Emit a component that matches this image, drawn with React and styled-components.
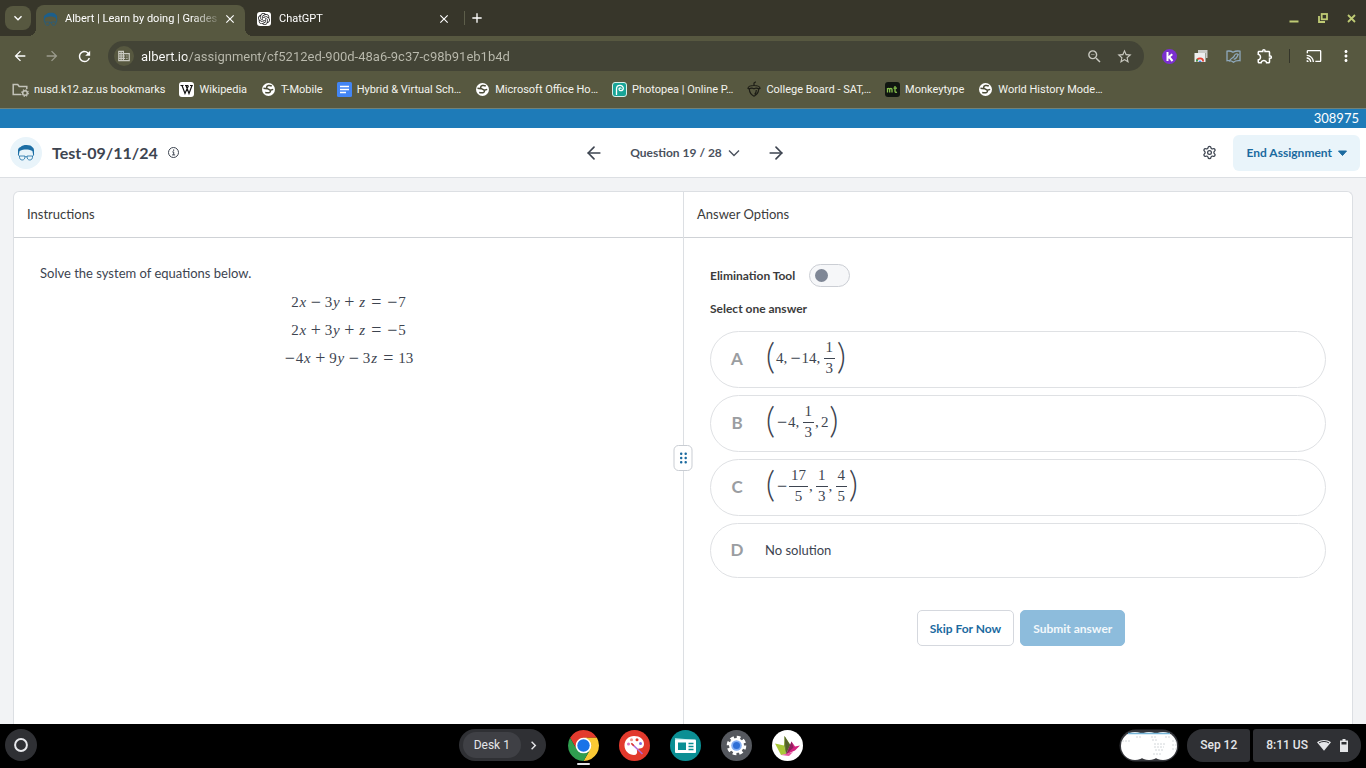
import { useState } from "react";
import styled, { createGlobalStyle, css } from "styled-components";
import {
  MdAdd,
  MdArrowBack,
  MdArrowForward,
  MdBusiness,
  MdCast,
  MdChevronRight,
  MdClose,
  MdKeyboardArrowDown,
  MdMoreVert,
  MdOutlineExtension,
  MdRefresh,
  MdStarBorder,
  MdZoomOut,
} from "react-icons/md";
import { SiOpenai } from "react-icons/si";
import { ArrowLeft, ArrowRight, Settings } from "lucide-react";

const GlobalStyles = createGlobalStyle`
  :root {
    --color-strip: #37362a;
    --color-toolbar: #575840;
    --color-omnibox: #434436;
    --color-blue: #1e7bb8;
    --color-blue-dark: #1b6a9f;
    --color-text: #3d4450;
    --color-line: #dcdfe3;
    --color-pill: #2f3034;
  }

  *,
  *::before,
  *::after {
    box-sizing: border-box;
  }

  body {
    margin: 0;
    font-family: Lato, sans-serif;
    font-size: 13px;
    color: var(--color-text);
  }

  button,
  input {
    font: inherit;
    color: inherit;
    border: none;
    background: none;
    padding: 0;
    margin: 0;
  }

  svg {
    display: block;
    flex-shrink: 0;
  }
`;

const Screen = styled.div`
  height: 100vh;
  display: flex;
  flex-direction: column;
  overflow: hidden;
`;

/* Browser */

const Browser = styled.header`
  font-family: Roboto, sans-serif;
  font-size: 11px;
  color: #fff;
  background-color: var(--color-toolbar);
  border-bottom: 1px solid #718279;
`;

const TabStrip = styled.div`
  height: 36px;
  display: flex;
  align-items: center;
  padding-left: 5px;
  background-color: var(--color-strip);
`;

const TabSearch = styled.button`
  width: 26px;
  height: 24px;
  border-radius: 8px;
  background-color: var(--color-toolbar);
  display: grid;
  place-items: center;
  margin-right: 5px;
`;

const Tab = styled.div`
  position: relative;
  width: 209px;
  height: 31px;
  align-self: flex-end;
  display: flex;
  align-items: center;
  padding: 0 8px 4px 7px;
  margin-right: 5px;
  border-radius: 8px 8px 0 0;

  ${(props) =>
    props.$active &&
    css`
      background-color: var(--color-toolbar);

      &::before,
      &::after {
        content: "";
        position: absolute;
        bottom: 0;
        width: 8px;
        height: 8px;
      }

      &::before {
        right: 100%;
        background: radial-gradient(
          circle at 0 0,
          transparent 8px,
          var(--color-toolbar) 8px
        );
      }

      &::after {
        left: 100%;
        background: radial-gradient(
          circle at 100% 0,
          transparent 8px,
          var(--color-toolbar) 8px
        );
      }
    `}
`;

const TabTitle = styled.span`
  flex: 1;
  margin-left: 8px;
  overflow: hidden;
  white-space: nowrap;
  mask-image: linear-gradient(90deg, #000 80%, transparent);
`;

const Favicon = styled.span`
  width: 14px;
  height: 14px;
  border-radius: 3px;
  display: grid;
  place-items: center;
  background-color: ${(props) => props.$bg || "transparent"};
  color: #222;
`;

const StripDivider = styled.span`
  width: 1px;
  height: 14px;
  background-color: #5d5e4a;
`;

const NewTab = styled.button`
  width: 24px;
  height: 28px;
  display: grid;
  place-items: center;
`;

const WindowControls = styled.div`
  margin-left: auto;
  display: flex;
  color: #bfcb74;
`;

const WindowButton = styled.button`
  width: 29px;
  height: 30px;
  display: grid;
  place-items: center;
`;

const Toolbar = styled.div`
  height: 40px;
  display: flex;
  align-items: center;
  padding: 0 4px;
`;

const ToolButton = styled.button`
  width: 32px;
  height: 32px;
  display: grid;
  place-items: center;
  opacity: ${(props) => (props.disabled ? 0.4 : 1)};
`;

const ToolDivider = styled.span`
  width: 1px;
  height: 14px;
  margin: 0 8px;
  background-color: #34352a;
`;

const Omnibox = styled.div`
  flex: 1;
  height: 30px;
  margin: 0 9px 0 8px;
  padding: 0 5px 0 6px;
  border-radius: 15px;
  background-color: var(--color-omnibox);
  color: #c9c9c0;
  display: flex;
  align-items: center;
`;

const SiteButton = styled.button`
  width: 20px;
  height: 20px;
  border-radius: 50%;
  background-color: var(--color-toolbar);
  display: grid;
  place-items: center;
  margin-right: 7px;
`;

const UrlInput = styled.input`
  flex: 1;
  min-width: 0;
  outline: none;
  font-size: 13px;
  color: #fff;
  background: linear-gradient(90deg, #fff 46px, #bbbbae 46px);
  background-clip: text;
  -webkit-text-fill-color: transparent;
`;

const OmniButton = styled.button`
  width: 30px;
  height: 30px;
  display: grid;
  place-items: center;
`;

const Bookmarks = styled.nav`
  height: 32px;
  display: flex;
  align-items: center;
  gap: 14px;
  padding: 0 12px 6px;
`;

const Bookmark = styled.a`
  display: flex;
  align-items: center;
  gap: 5px;
  color: #f4f4ee;
  text-decoration: none;
  white-space: nowrap;
`;

/* Assignment page */

const Banner = styled.div`
  height: 19px;
  line-height: 19px;
  padding-right: 7px;
  text-align: right;
  color: #fff;
  background-color: var(--color-blue);
`;

const PageHeader = styled.header`
  height: 50px;
  display: grid;
  grid-template-columns: 1fr auto 1fr;
  align-items: center;
  padding: 0 6px 0 10px;
  background-color: #fff;
  border-bottom: 1px solid var(--color-line);
`;

const Brand = styled.div`
  display: flex;
  align-items: center;
`;

const Avatar = styled.span`
  width: 32px;
  height: 32px;
  border-radius: 50%;
  background-color: #e9f4fa;
  display: grid;
  place-items: center;
  margin-right: 10px;
`;

const Title = styled.h1`
  margin: 0 10px 0 0;
  font-size: 16px;
  font-weight: 700;
`;

const PlainButton = styled.button`
  display: grid;
  place-items: center;
  color: var(--color-text);
`;

const QuestionNav = styled.nav`
  display: flex;
  align-items: center;
  gap: 26px;
`;

const QuestionButton = styled.button`
  display: flex;
  align-items: center;
  gap: 6px;
  font-size: 12px;
  font-weight: 700;
  color: #4a515d;
`;

const HeaderActions = styled.div`
  display: flex;
  align-items: center;
  justify-content: flex-end;
  gap: 16px;
`;

const EndButton = styled.button`
  height: 36px;
  padding: 0 13px;
  border-radius: 6px;
  display: flex;
  align-items: center;
  gap: 6px;
  font-size: 12px;
  font-weight: 700;
  color: var(--color-blue-dark);
  background-color: #e9f4fa;
`;

const Workspace = styled.main`
  flex: 1;
  min-height: 0;
  display: flex;
  padding: 13px 13px 0;
  background-color: #f2f3f5;
`;

const Panels = styled.div`
  position: relative;
  flex: 1;
  display: grid;
  grid-template-columns: 1fr 1fr;
  background-color: #fff;
  border: 1px solid var(--color-line);
  border-bottom: none;
  border-radius: 6px 6px 0 0;
`;

const Panel = styled.section`
  & + & {
    border-left: 1px solid var(--color-line);
  }
`;

const PanelTitle = styled.h2`
  margin: 0;
  height: 46px;
  line-height: 44px;
  padding: 0 13px;
  font-size: 13px;
  font-weight: 400;
  color: #3c3c3c;
  border-bottom: 1px solid #cfd2d6;
`;

const PanelBody = styled.div`
  padding: 26px;
`;

const Handle = styled.button`
  position: absolute;
  top: 50%;
  left: 50%;
  translate: -50% -50%;
  width: 19px;
  height: 26px;
  border: 1px solid #c9cdd3;
  border-radius: 5px;
  background-color: #fff;
  display: grid;
  place-items: center;
`;

const Prompt = styled.p`
  margin: 0 0 6px;
  line-height: 18px;
`;

const Equation = styled.div`
  height: 28px;
  display: flex;
  justify-content: center;
  align-items: center;
`;

const MathText = styled.span`
  display: inline-flex;
  align-items: center;
  font-family: "Liberation Serif", serif;
  font-size: 15px;
  line-height: 16px;
  white-space: pre;
`;

const Variable = styled.i`
  width: 8px;
  text-align: center;
`;

const Operator = styled.span`
  width: ${(props) => props.$width || 18}px;
  font-size: 18px;
  text-align: center;
`;

const Paren = styled.span`
  width: 11px;
  height: 42px;
  font-family: Lato, sans-serif;
  font-size: 36px;
  font-weight: 300;
  line-height: 36px;
  text-align: center;
`;

const Comma = styled.span`
  width: 6px;
`;

const Fraction = styled.span`
  display: inline-flex;
  flex-direction: column;
  text-align: center;
  margin: 0 1px;
`;

const Numerator = styled.span`
  padding: 0 2px 3px;
  border-bottom: 1px solid currentColor;
`;

const Denominator = styled.span`
  padding-top: 1px;
`;

const ToolRow = styled.label`
  display: flex;
  align-items: center;
  gap: 14px;
  height: 23px;
  font-size: 12px;
  font-weight: 700;
  color: #3c3c3c;
`;

const Switch = styled.input`
  appearance: none;
  width: 41px;
  height: 23px;
  padding: 0 5px;
  border: 1px solid #cbced4;
  border-radius: 12px;
  background-color: #f6f7f9;
  display: flex;
  align-items: center;

  &::before {
    content: "";
    width: 13px;
    height: 13px;
    border-radius: 50%;
    background-color: #7f8796;
  }

  &:checked {
    justify-content: flex-end;
  }
`;

const Answers = styled.fieldset`
  margin: 0;
  padding: 0;
  border: none;
  display: grid;
  gap: 7px;
`;

const Legend = styled.legend`
  padding: 12px 0;
  font-size: 12px;
  line-height: 20px;
  font-weight: 700;
  color: #3c3c3c;
`;

const Option = styled.label`
  min-height: 55px;
  display: flex;
  align-items: center;
  padding: 0 15px 2px;
  border: 1px solid #dfe1e4;
  border-radius: 29px;

  &:has(input:checked) {
    border-color: var(--color-blue);
  }
`;

const Radio = styled.input`
  appearance: none;
  width: 0;
  height: 0;
`;

const Letter = styled.span`
  width: 22px;
  margin-right: 17px;
  font-size: 17px;
  font-weight: 700;
  text-align: center;
  color: #9a9da1;
`;

const OptionMath = styled.span`
  height: 53px;
  display: flex;
  align-items: center;
  padding-bottom: 2px;
`;

const Actions = styled.div`
  display: flex;
  justify-content: center;
  gap: 6px;
  padding: 32px 0 0 6px;
`;

const Button = styled.button`
  height: 36px;
  padding: 0 12px;
  border: 1px solid ${(props) => (props.$primary ? "#8dbcdc" : "#d5d8de")};
  border-radius: 5px;
  font-size: 12px;
  font-weight: 700;
  color: ${(props) => (props.$primary ? "#f3f8fb" : "var(--color-blue-dark)")};
  background-color: ${(props) => (props.$primary ? "#8dbcdc" : "#fff")};
`;

/* Shelf */

const Shelf = styled.footer`
  height: 44px;
  display: grid;
  grid-template-columns: auto 4fr auto 3fr auto;
  align-items: center;
  padding: 0 5px 2px;
  font-family: Roboto, sans-serif;
  font-size: 12px;
  color: #e4e5e8;
  background-color: #000;
`;

const Launcher = styled.button`
  width: 32px;
  height: 32px;
  border-radius: 50%;
  background-color: var(--color-pill);
  display: grid;
  place-items: center;
`;

const ShelfApps = styled.div`
  grid-column: 3;
  display: flex;
  align-items: center;
  gap: 20px;
`;

const Desk = styled.button`
  height: 32px;
  padding: 0 4px;
  margin-right: 2px;
  border-radius: 16px;
  background-color: var(--color-pill);
  display: flex;
  align-items: center;
  gap: 4px;
`;

const DeskName = styled.span`
  height: 26px;
  line-height: 26px;
  padding: 0 11px;
  border-radius: 13px;
  background-color: #3f4045;
`;

const AppButton = styled.button`
  position: relative;

  ${(props) =>
    props.$open &&
    css`
      &::after {
        content: "";
        position: absolute;
        left: 9px;
        top: 33px;
        width: 13px;
        height: 2px;
        border-radius: 1px;
        background-color: #e4e5e8;
      }
    `}
`;

const Status = styled.div`
  grid-column: 5;
  display: flex;
  align-items: center;
  font-weight: 500;
`;

const StatusPill = styled.button`
  height: 33px;
  display: flex;
  align-items: center;
  gap: 9px;
  padding: 0 13px;
  background-color: var(--color-pill);
  border-radius: ${(props) =>
    props.$side === "left" ? "16px 3px 3px 16px" : "3px 16px 16px 3px"};
  margin-left: ${(props) => (props.$side === "left" ? "8px" : "3px")};
`;

function AlbertIcon({ size = 18, color = "#1c6ea5", lens = "#e9f4fa" }) {
  return (
    <svg width={size} height={size} viewBox="0 0 18 18">
      <path
        d="M1 11V6.500C1 4.500 2 3.600 3.600 3 5 1.500 7 1 9.600 1c3 0 5 .8 5.600 2C16.600 3.700 17 5 17 6.500V11h-.8L15.400 7C13 5.800 11 5.500 9 5.500S5 5.800 2.600 7L1.800 11z"
        fill={color}
      />
      <g fill={lens} stroke={color} strokeWidth=".8">
        <path d="M2.500 12h5.400c.3 2.800-1 4-2.700 4S2.200 14.800 2.500 12z" />
        <path d="M10.100 12h5.400c.3 2.800-1 4-2.700 4S9.800 14.800 10.100 12z" />
        <path d="M7.900 13q1.100-.8 2.200 0M1.300 10.800l1.200 1.700M16.700 10.800l-1.200 1.700" fill="none" />
      </g>
    </svg>
  );
}

function GlobeIcon() {
  return (
    <svg width="15" height="15" viewBox="0 0 15 15">
      <circle cx="7.500" cy="7.500" r="6.500" fill="#fff" />
      <path
        d="M10.800 4C8.500 2.900 5.500 3.500 5.600 5.500c.1 2.200 3.900 1.200 3.900 3.400 0 1.900-2.300 2.200-5.300 1.700M2.500 6.300l3.300.5M9.300 8.300l2.900-.9"
        fill="none"
        stroke="#4b4c38"
        strokeWidth="1.500"
      />
    </svg>
  );
}

function FolderIcon() {
  return (
    <svg width="17" height="15" viewBox="0 0 17 15" fill="none" stroke="#c3c3b9">
      <path d="M9 12.500H1.200V2.500h4.500l1.500 2h7.600v2.500" strokeWidth="1.500" />
      <circle cx="13" cy="11" r="2.300" strokeWidth="1.500" />
      <circle cx="13" cy="11" r="3.300" strokeWidth="1.200" strokeDasharray="1.300 1.300" />
    </svg>
  );
}

function WikipediaIcon() {
  return (
    <svg width="15" height="15" viewBox="0 0 15 15">
      <rect width="15" height="15" rx="3" fill="#fff" />
      <path
        d="M1.500 3.500h3M6 3.500h3M11 3.500h2.800M3 3.500l3 8 3.500-8M7 3.500l3 8 3-8"
        stroke="#111"
        strokeWidth="1.200"
        fill="none"
      />
    </svg>
  );
}

function DocsIcon() {
  return (
    <svg width="15" height="15" viewBox="0 0 15 15">
      <rect width="15" height="15" rx="1.500" fill="#4285f4" />
      <path d="M3 4.500h9M3 7.500h9M3 10.500h6" stroke="#fff" strokeWidth="1.500" />
    </svg>
  );
}

function PhotopeaIcon() {
  return (
    <svg width="15" height="15" viewBox="0 0 15 15">
      <rect x=".5" y=".5" width="14" height="14" rx="2.500" fill="#18a497" stroke="#d8efe9" />
      <path
        d="M4.500 13V7c0-5 7-4.500 6.800-.6C11 9.500 6.800 9.200 7 6.900c.2-1.400 2.200-1.300 2.100-.1"
        fill="none"
        stroke="#fff"
        strokeWidth="1.300"
      />
    </svg>
  );
}

function AcornIcon() {
  return (
    <svg width="14" height="16" viewBox="0 0 14 16" fill="none" stroke="#1d1d16" strokeWidth="1.200">
      <path d="M7 4.500V2L8.800.8M1 7.500c0-2 2.500-3 6-3s6 1 6 3c-1.500.6-2.500-.4-4-.4-1.200 0-1.300.6-2 .6s-1-.6-2-.6c-1.500 0-2.500 1-4 .4z" />
      <path d="M2.300 8C2.500 11.500 4.500 14 7 15.200c2.500-1.200 4.500-3.700 4.700-7.200M9.300 9c0 2-.5 3.300-1.600 4.500" />
    </svg>
  );
}

function MonkeytypeIcon() {
  return (
    <svg width="15" height="15" viewBox="0 0 15 15">
      <rect width="15" height="15" rx="3" fill="#111611" />
      <path
        d="M2.500 10.500V6M2.500 7.500c0-1.500 2.200-1.500 2.200 0v3M4.700 7.500c0-1.500 2.300-1.500 2.300 0v3M10 4v5.200c0 1 .8 1.300 2 1M8.500 6.200H12"
        fill="none"
        stroke="#86c04c"
        strokeWidth="1.300"
      />
    </svg>
  );
}

function KamiIcon() {
  return (
    <svg width="15" height="15" viewBox="0 0 15 15">
      <circle cx="7.500" cy="7.500" r="7.500" fill="#7b2fd0" />
      <path d="M5.500 3v9M10.300 5.200L6 8.700M7.200 8l3.300 4" stroke="#fff" strokeWidth="2" />
    </svg>
  );
}

function ShareWindowIcon() {
  return (
    <svg width="14" height="14" viewBox="0 0 14 14">
      <path d="M4 1h9.500v8H12V4H4z" fill="#c9cac7" />
      <rect x=".500" y="4" width="11" height="9" fill="#eceeef" />
      <path d="M2.800 12.500a3.200 3.200 0 0 1 6.400 0" fill="none" stroke="#e34133" strokeWidth="1.800" />
      <path d="M2.800 12.500a3.200 3.200 0 0 1 .8-2.200" stroke="#2f9e4f" strokeWidth="1.800" fill="none" />
      <path d="M4.500 13a1.500 1.500 0 0 1 3 0z" fill="#3f7ee8" />
    </svg>
  );
}

function ReaderIcon() {
  return (
    <svg width="15" height="13" viewBox="0 0 15 13" fill="none" stroke="#8fa9bd" strokeWidth="1.300">
      <path d="M1 1.200c2.500-.5 4.500 0 6 1 1.800-1 4-1.500 7-1v9.500c-2.800-.3-5 .1-6.500 1.500C6 10.800 4 10.400 1 10.700z" />
      <path d="M3.500 11.500c.5-4 4-3 4.700-5.500.6-2 2.500-2.800 4-1.500-1 2.500-2 5-4.500 4.500" />
    </svg>
  );
}

function InfoIcon() {
  return (
    <svg width="11" height="11" viewBox="0 0 11 11" fill="none" stroke="currentColor">
      <circle cx="5.500" cy="5.500" r="5" />
      <path d="M4.300 4.900h1.400v2.900M4.100 7.900h3" />
      <path d="M5 3.100h1.200" strokeWidth="1.200" />
    </svg>
  );
}

function ChromeIcon() {
  return (
    <svg width="31" height="31" viewBox="2 2 44 44">
      <circle cx="24" cy="24" r="12" fill="#fff" />
      <path d="M4.950 13A22 22 0 0 1 43.050 13H24A11 11 0 0 0 14.470 29.500Z" fill="#e33b2e" />
      <path d="M43.050 13A22 22 0 0 1 24 46L33.530 29.500A11 11 0 0 0 24 13Z" fill="#fbc934" />
      <path d="M24 46A22 22 0 0 1 4.950 13L14.470 29.500A11 11 0 0 0 33.530 29.500Z" fill="#2f9e4f" />
      <circle cx="24" cy="24" r="8.800" fill="#1a73e8" />
    </svg>
  );
}

function CanvasIcon() {
  return (
    <svg width="31" height="31" viewBox="0 0 31 31">
      <circle cx="15.500" cy="15.500" r="15.500" fill="#e2392c" />
      <path
        d="M15 6c6 0 10 3.500 10 8 0 3-2 4.500-4.500 4.500-2 0-3 .8-2.500 2.500.5 2-.5 4-3 4-5 0-9.500-4-9.500-9.500S9.500 6 15 6z"
        fill="#fff"
      />
      <circle cx="9.500" cy="14" r="1.500" fill="#d979c0" />
      <circle cx="12.500" cy="9.800" r="1.500" fill="#f0958a" />
      <circle cx="18" cy="9.800" r="1.500" fill="#e2392c" />
      <circle cx="21.500" cy="13.500" r="1.500" fill="#8b6ae0" />
      <path d="M13 14l10.500 10" stroke="#b06bd8" strokeWidth="1.600" />
      <path d="M12.300 13.300l2.500 2.500" stroke="#e2392c" strokeWidth="1.600" />
    </svg>
  );
}

function ScreencastIcon() {
  return (
    <svg width="31" height="31" viewBox="0 0 31 31">
      <circle cx="15.500" cy="15.500" r="15.500" fill="#0b8f94" />
      <path d="M5 8l20 2v13H6z" fill="#9edfe0" />
      <rect x="5" y="9.500" width="21" height="13.500" rx="1" fill="#fff" />
      <rect x="8" y="12.500" width="8" height="7.500" fill="#0b8f94" />
      <path d="M18.500 13.500h5M18.500 16.500h5M18.500 19.500h5" stroke="#0b8f94" strokeWidth="1.500" />
    </svg>
  );
}

function SettingsIcon() {
  return (
    <svg width="31" height="31" viewBox="0 0 31 31">
      <circle cx="15.500" cy="15.500" r="15.500" fill="#55585e" />
      <circle cx="15.500" cy="15.500" r="7.500" fill="#fff" />
      <circle
        cx="15.500"
        cy="15.500"
        r="8.300"
        fill="none"
        stroke="#fff"
        strokeWidth="3"
        strokeDasharray="3.700 2.819"
      />
      <circle cx="15.500" cy="15.500" r="5.300" fill="#84aef2" />
      <circle cx="15.500" cy="15.500" r="3.500" fill="#2f6fd6" />
    </svg>
  );
}

function OrigamiIcon() {
  return (
    <svg width="31" height="31" viewBox="0 0 31 31">
      <circle cx="15.500" cy="15.500" r="15.500" fill="#fff" />
      <path d="M3 13.500l9 2 2 8.500-5 1z" fill="#a9c837" />
      <path d="M12.500 6l6 9-4.500 9-2-8z" fill="#7d9a2f" />
      <path d="M12.500 6l1.500 18 4-9z" fill="#55622c" />
      <path d="M19.500 11.500l3.500 5 5-1-5 5-9 4 4-8z" fill="#d3227f" />
      <path d="M19.500 11.500l2 6-7.500 7z" fill="#8e1f5e" />
      <path d="M9 25l5-1 7-2-4 4z" fill="#e4569e" />
    </svg>
  );
}

function TotePreview() {
  return (
    <svg width="60" height="33" viewBox="0 0 60 33">
      <rect x=".500" y=".500" width="59" height="32" rx="16" fill="#34353a" />
      <circle cx="16" cy="17" r="14" fill="#fff" />
      <circle cx="30" cy="17" r="14" fill="#fff" />
      <circle cx="44" cy="17" r="14" fill="#fff" />
      <path d="M13 5h34v12H13z" fill="#fff" />
      <path d="M9 4.500h42" stroke="#74b3d6" strokeWidth="1.500" />
      <path
        d="M3 12h8M17 8h5M32 8h5M46 8h6M33 11h5M35 15h11M35 18h10M36 21h9M34 25h9M53 12h4M53 16h5M53 20h4"
        stroke="#d2d6d9"
        strokeDasharray="2 1"
      />
    </svg>
  );
}

function MathFraction({ top, bottom }) {
  return (
    <Fraction>
      <Numerator>{top}</Numerator>
      <Denominator>{bottom}</Denominator>
    </Fraction>
  );
}

// Turns a string like "2x + 3y = −7" into spaced math tokens
function MathLine({ children }) {
  const tokens = children.split(" ");

  return (
    <MathText>
      {tokens.map((token, i) => {
        if (token === "=") return <Operator key={i} $width={20}>=</Operator>;
        if (token === "−" || token === "+")
          return <Operator key={i}>{token}</Operator>;
        return [...token].map((char, j) => {
          if (char === "−")
            return <Operator key={`${i}-${j}`} $width={12}>−</Operator>;
          if (/[xyz]/.test(char))
            return <Variable key={`${i}-${j}`}>{char}</Variable>;
          return <span key={`${i}-${j}`}>{char}</span>;
        });
      })}
    </MathText>
  );
}

const bookmarks = [
  { label: "nusd.k12.az.us bookmarks", icon: <FolderIcon /> },
  { label: "Wikipedia", icon: <WikipediaIcon /> },
  { label: "T-Mobile", icon: <GlobeIcon /> },
  { label: "Hybrid & Virtual Sch…", icon: <DocsIcon /> },
  { label: "Microsoft Office Ho…", icon: <GlobeIcon /> },
  { label: "Photopea | Online P…", icon: <PhotopeaIcon /> },
  { label: "College Board - SAT,…", icon: <AcornIcon /> },
  { label: "Monkeytype", icon: <MonkeytypeIcon /> },
  { label: "World History Mode…", icon: <GlobeIcon /> },
];

const options = [
  {
    letter: "A",
    content: (
      <MathText>
        <Paren>(</Paren>4<Comma>,</Comma>
        <Operator $width={12}>−</Operator>14<Comma>,</Comma>
        <MathFraction top="1" bottom="3" />
        <Paren>)</Paren>
      </MathText>
    ),
  },
  {
    letter: "B",
    content: (
      <MathText>
        <Paren>(</Paren>
        <Operator $width={12}>−</Operator>4<Comma>,</Comma>
        <MathFraction top="1" bottom="3" />
        <Comma>,</Comma>2<Paren>)</Paren>
      </MathText>
    ),
  },
  {
    letter: "C",
    content: (
      <MathText>
        <Paren>(</Paren>
        <Operator $width={12}>−</Operator>
        <MathFraction top="17" bottom="5" />
        <Comma>,</Comma>
        <MathFraction top="1" bottom="3" />
        <Comma>,</Comma>
        <MathFraction top="4" bottom="5" />
        <Paren>)</Paren>
      </MathText>
    ),
  },
  { letter: "D", text: "No solution" },
];

function BrowserChrome() {
  return (
    <Browser>
      <TabStrip>
        <TabSearch aria-label="Search tabs">
          <MdKeyboardArrowDown size={16} />
        </TabSearch>
        <Tab $active>
          <Favicon>
            <AlbertIcon size={15} color="#1c5f8c" lens="#575840" />
          </Favicon>
          <TabTitle>Albert | Learn by doing | Grades</TabTitle>
          <MdClose size={14} />
        </Tab>
        <Tab>
          <Favicon $bg="#fff">
            <SiOpenai size={12} />
          </Favicon>
          <TabTitle>ChatGPT</TabTitle>
          <MdClose size={14} />
        </Tab>
        <StripDivider />
        <NewTab aria-label="New tab">
          <MdAdd size={16} />
        </NewTab>
        <WindowControls>
          <WindowButton aria-label="Minimize">
            <svg width="10" height="10" viewBox="0 0 10 10">
              <path d="M.500 8.500h9" stroke="currentColor" strokeWidth="2" />
            </svg>
          </WindowButton>
          <WindowButton aria-label="Restore">
            <svg width="10" height="10" viewBox="0 0 10 10" fill="none" stroke="currentColor">
              <rect x="3.700" y="1" width="5.300" height="5.300" strokeWidth="1.800" />
              <path d="M1 3v6h6" strokeWidth="1.800" />
            </svg>
          </WindowButton>
          <WindowButton aria-label="Close window">
            <svg width="9" height="9" viewBox="0 0 9 9">
              <path d="M1 1l7 7M8 1L1 8" stroke="currentColor" strokeWidth="1.800" />
            </svg>
          </WindowButton>
        </WindowControls>
      </TabStrip>

      <Toolbar>
        <ToolButton aria-label="Back">
          <MdArrowBack size={16} />
        </ToolButton>
        <ToolButton aria-label="Forward" disabled>
          <MdArrowForward size={16} />
        </ToolButton>
        <ToolButton aria-label="Reload">
          <MdRefresh size={17} />
        </ToolButton>
        <Omnibox>
          <SiteButton aria-label="Site information">
            <MdBusiness size={14} />
          </SiteButton>
          <UrlInput
            aria-label="Address"
            defaultValue="albert.io/assignment/cf5212ed-900d-48a6-9c37-c98b91eb1b4d"
          />
          <OmniButton aria-label="Zoom">
            <MdZoomOut size={17} />
          </OmniButton>
          <OmniButton aria-label="Bookmark this tab">
            <MdStarBorder size={17} />
          </OmniButton>
        </Omnibox>
        <ToolButton aria-label="Kami">
          <KamiIcon />
        </ToolButton>
        <ToolButton aria-label="Share window">
          <ShareWindowIcon />
        </ToolButton>
        <ToolButton aria-label="Reader">
          <ReaderIcon />
        </ToolButton>
        <ToolButton aria-label="Extensions">
          <MdOutlineExtension size={18} />
        </ToolButton>
        <ToolDivider />
        <ToolButton aria-label="Cast">
          <MdCast size={16} />
        </ToolButton>
        <ToolButton aria-label="Menu">
          <MdMoreVert size={18} />
        </ToolButton>
      </Toolbar>

      <Bookmarks>
        {bookmarks.map((bookmark) => (
          <Bookmark href="#" key={bookmark.label}>
            {bookmark.icon}
            {bookmark.label}
          </Bookmark>
        ))}
      </Bookmarks>
    </Browser>
  );
}

function AssignmentHeader() {
  return (
    <PageHeader>
      <Brand>
        <Avatar>
          <AlbertIcon />
        </Avatar>
        <Title>Test-09/11/24</Title>
        <PlainButton aria-label="Assignment info">
          <InfoIcon />
        </PlainButton>
      </Brand>
      <QuestionNav>
        <PlainButton aria-label="Previous question">
          <ArrowLeft size={20} />
        </PlainButton>
        <QuestionButton>
          Question 19 / 28
          <svg width="12" height="8" viewBox="0 0 12 8">
            <path d="M1 1.500l5 5 5-5" fill="none" stroke="currentColor" strokeWidth="1.400" />
          </svg>
        </QuestionButton>
        <PlainButton aria-label="Next question">
          <ArrowRight size={20} />
        </PlainButton>
      </QuestionNav>
      <HeaderActions>
        <PlainButton aria-label="Settings">
          <Settings size={15} />
        </PlainButton>
        <EndButton>
          End Assignment
          <svg width="9" height="6" viewBox="0 0 9 6">
            <path d="M.500 1h8l-4 4.500z" fill="currentColor" stroke="currentColor" strokeLinejoin="round" />
          </svg>
        </EndButton>
      </HeaderActions>
    </PageHeader>
  );
}

function AnswerPanel() {
  const [elimination, setElimination] = useState(false);

  return (
    <Panel>
      <PanelTitle>Answer Options</PanelTitle>
      <PanelBody>
        <ToolRow>
          Elimination Tool
          <Switch
            type="checkbox"
            role="switch"
            checked={elimination}
            onChange={() => setElimination((on) => !on)}
          />
        </ToolRow>
        <Answers>
          <Legend>Select one answer</Legend>
          {options.map((option) => (
            <Option key={option.letter}>
              <Radio type="radio" name="answer" value={option.letter} />
              <Letter>{option.letter}</Letter>
              {option.text || <OptionMath>{option.content}</OptionMath>}
            </Option>
          ))}
        </Answers>
        <Actions>
          <Button>Skip For Now</Button>
          <Button $primary>Submit answer</Button>
        </Actions>
      </PanelBody>
    </Panel>
  );
}

function ShelfBar() {
  return (
    <Shelf>
      <Launcher aria-label="Launcher">
        <svg width="14" height="14" viewBox="0 0 14 14">
          <circle cx="7" cy="7" r="5.900" fill="none" stroke="#e8e9ec" strokeWidth="2" />
        </svg>
      </Launcher>
      <ShelfApps>
        <Desk>
          <DeskName>Desk 1</DeskName>
          <MdChevronRight size={17} />
        </Desk>
        <AppButton $open aria-label="Chrome">
          <ChromeIcon />
        </AppButton>
        <AppButton aria-label="Canvas">
          <CanvasIcon />
        </AppButton>
        <AppButton aria-label="Screencast">
          <ScreencastIcon />
        </AppButton>
        <AppButton aria-label="Settings">
          <SettingsIcon />
        </AppButton>
        <AppButton aria-label="Origami">
          <OrigamiIcon />
        </AppButton>
      </ShelfApps>
      <Status>
        <TotePreview />
        <StatusPill $side="left">Sep 12</StatusPill>
        <StatusPill $side="right">
          8:11 US
          <svg width="14" height="12" viewBox="0 0 14 12">
            <path d="M0 3.200C4 .2 10 .2 14 3.200L7 11.800z" fill="currentColor" />
            <path d="M2 3.900c3-1.900 7-1.900 10 0" stroke="#2f3034" strokeWidth="1" fill="none" />
          </svg>
          <svg width="8" height="13" viewBox="0 0 8 13">
            <path d="M2.500 0h3v1.500H8V13H0V1.500h2.500z" fill="currentColor" />
            <path d="M1.500 3h5v2.500h-5z" fill="#2f3034" />
          </svg>
        </StatusPill>
      </Status>
    </Shelf>
  );
}

function App() {
  return (
    <Screen>
      <GlobalStyles />
      <BrowserChrome />
      <Banner>308975</Banner>
      <AssignmentHeader />
      <Workspace>
        <Panels>
          <Panel>
            <PanelTitle>Instructions</PanelTitle>
            <PanelBody>
              <Prompt>Solve the system of equations below.</Prompt>
              <Equation>
                <MathLine>2x − 3y + z = −7</MathLine>
              </Equation>
              <Equation>
                <MathLine>2x + 3y + z = −5</MathLine>
              </Equation>
              <Equation>
                <MathLine>−4x + 9y − 3z = 13</MathLine>
              </Equation>
            </PanelBody>
          </Panel>
          <AnswerPanel />
          <Handle aria-label="Resize panels">
            <svg width="8" height="12" viewBox="0 0 8 12" fill="#1b6a9f">
              <rect x=".500" y=".500" width="2.400" height="2.400" rx="1" />
              <rect x="5" y=".500" width="2.400" height="2.400" rx="1" />
              <rect x=".500" y="4.800" width="2.400" height="2.400" rx="1" />
              <rect x="5" y="4.800" width="2.400" height="2.400" rx="1" />
              <rect x=".500" y="9.100" width="2.400" height="2.400" rx="1" />
              <rect x="5" y="9.100" width="2.400" height="2.400" rx="1" />
            </svg>
          </Handle>
        </Panels>
      </Workspace>
      <ShelfBar />
    </Screen>
  );
}

export default App;
